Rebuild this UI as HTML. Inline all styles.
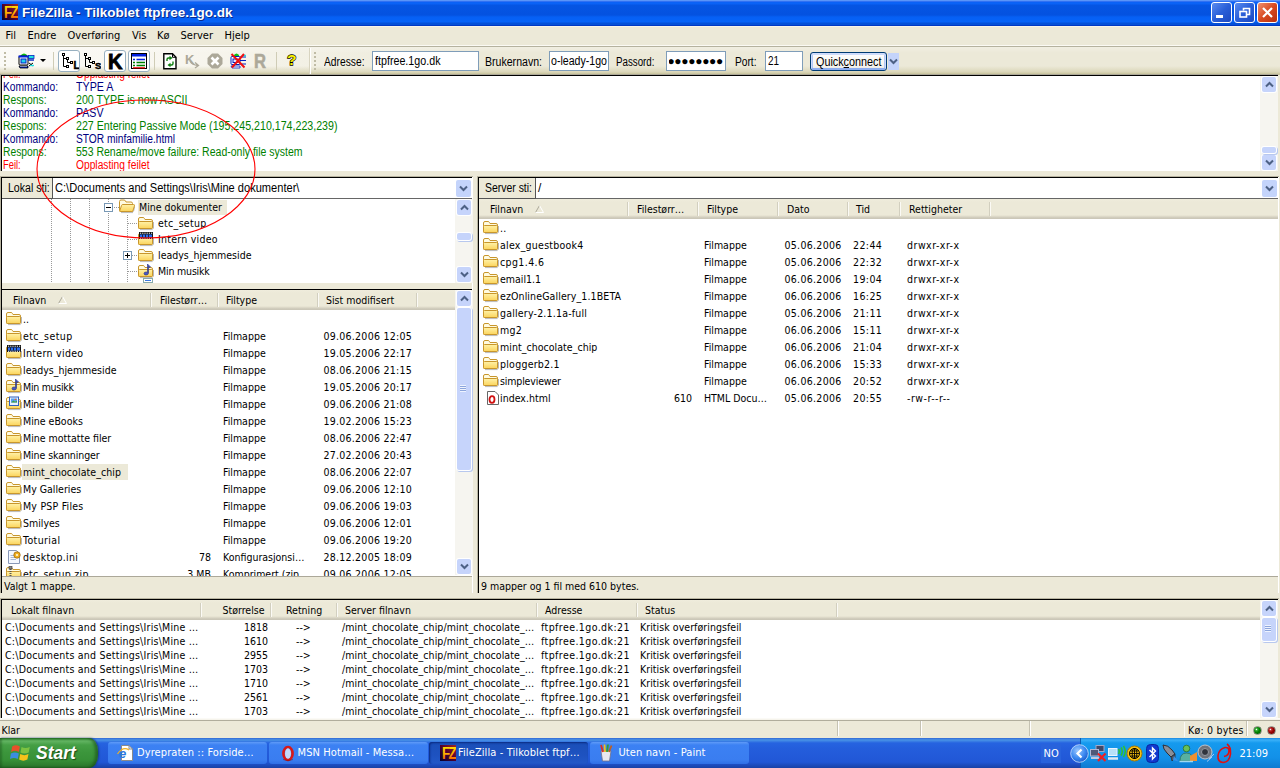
<!DOCTYPE html>
<html lang="no"><head><meta charset="utf-8"><title>FileZilla - Tilkoblet ftpfree.1go.dk</title>
<style>
html,body{margin:0;padding:0;}
body{width:1280px;height:768px;overflow:hidden;background:#ECE9D8;position:relative;font-family:'DejaVu Sans Condensed','DejaVu Sans','Liberation Sans',sans-serif;font-stretch:condensed;font-size:10.5px;color:#000;}
*{box-sizing:border-box;}
.a{position:absolute;white-space:pre;}
.t{position:absolute;white-space:pre;line-height:14px;height:14px;}
.ar{font-family:'Liberation Sans',sans-serif;}
#title{left:0;top:0;width:1280px;height:26px;background:linear-gradient(#5a94f8 0,#5a94f8 1px,#2f70f2 1px,#2f70f2 2px,#0a62f6 2px,#0a62f6 4px,#0555e3 5px,#0452e0 15px,#0660f4 17px,#0663f8 22px,#0450d8 23px,#0450d8 25px,#0038c4 25px);}
#title .txt{left:22px;top:4px;height:18px;line-height:18px;font-family:'Liberation Sans',sans-serif;font-weight:bold;font-size:13.5px;color:#fff;text-shadow:1px 1px 0 #0a2a8a;}
.tb{top:2px;width:21px;height:21px;border:1px solid #fff;border-radius:3px;background:linear-gradient(135deg,#5a8cf0,#2a5fd8 50%,#1c48c0);}
.tb.close{background:linear-gradient(135deg,#f09070,#d84a20 50%,#b83010);}
#menu{left:0;top:26px;width:1280px;height:20px;}
#menu span{position:absolute;top:3px;line-height:14px;font-size:11px;}
.pane{background:#fff;}
.hdr{background:#ECE9D8;}
.lh{background:linear-gradient(#efecdc 0,#ECE9D8 3px,#ECE9D8 16px,#e2decd 17px,#d6d2c2 18px,#cbc7b8 19px,#cbc7b8 20px);}
.hdr .t{top:3px;}
.sep{position:absolute;top:3px;width:1px;height:14px;background:#d2cfbf;box-shadow:1px 0 0 #fbfaf5;}
.row{position:absolute;left:0;height:17px;}
.sb{position:absolute;background:#f6f5f0;}
.sbb{position:absolute;left:2px;width:14px;height:15px;background:#c6d4fb;border-radius:2px;box-shadow:0 0 0 1px #fff;}
.sbb svg{position:absolute;left:2.5px;top:4px;}
.thumb{position:absolute;left:2px;width:14px;background:#c6d4fb;border-radius:2px;box-shadow:0 0 0 1px #fff,1px 1px 0 1px #b8c8ee;}
.ico{position:absolute;width:16px;height:16px;}
.c1{color:#000080;} .c2{color:#008000;} .c3{color:#ff0000;}
.inp{position:absolute;background:#fff;border:1px solid #7f9db9;height:20px;top:51px;}
.inp span{position:absolute;left:2px;top:2px;font-family:'Liberation Sans',sans-serif;font-size:12px;line-height:14px;white-space:pre;}
.lbl{position:absolute;top:54px;font-family:'Liberation Sans',sans-serif;font-size:11px;line-height:14px;white-space:pre;}
.tk{position:absolute;top:742px;height:22px;width:159px;border-radius:3px;background:linear-gradient(#5f9bf8 0,#3c81f3 3px,#3a7df0 18px,#2f6fe6);color:#fff;font-size:11px;letter-spacing:.1px;}
.tk.act{background:linear-gradient(#1a4fb8,#1e52c0 60%,#2258c8);box-shadow:inset 1px 1px 2px #0a2a80;}
.tk span{position:absolute;left:29px;top:4px;line-height:14px;white-space:pre;}
</style></head><body>

<svg width="0" height="0" style="position:absolute">
<defs>
<linearGradient id="fg" x1="0" y1="0" x2="0" y2="1"><stop offset="0" stop-color="#fff2a8"/><stop offset="1" stop-color="#fbd45c"/></linearGradient>
<symbol id="folder" viewBox="0 0 16 16">
<path d="M2 13.6 H14.6 M15.5 6 V12.6" stroke="#000" stroke-opacity=".28" stroke-width="1" fill="none"/>
<path d="M0.5 3 Q0.5 1.5 2 1.5 L5 1.5 Q6 1.5 6.5 2.5 L7 3.5 L13 3.5 Q14.5 3.5 14.5 5 L14.5 11.5 Q14.5 12.5 13.5 12.5 L1.5 12.5 Q0.5 12.5 0.5 11.5 Z" fill="#fffbe0" stroke="#c8962c" stroke-width="1"/>
<path d="M0.5 6.5 Q0.5 5.5 1.5 5.5 L13.5 5.5 Q14.5 5.5 14.5 6.5 L14.5 11.5 Q14.5 12.5 13.5 12.5 L1.5 12.5 Q0.5 12.5 0.5 11.5 Z" fill="url(#fg)" stroke="#c8962c" stroke-width="1"/>
</symbol>
<symbol id="folderopen" viewBox="0 0 16 16">
<path d="M2 13.6 H14 M15.5 8 L14.5 12.6" stroke="#000" stroke-opacity=".28" stroke-width="1" fill="none"/>
<path d="M0.5 2.5 Q0.5 1 2 1 L5 1 Q6 1 6.5 2 L7 3 L12 3 Q13.5 3 13.5 4.5 L13.5 12.5 L1.5 12.5 Q0.5 12.5 0.5 11.5 Z" fill="#fffbe0" stroke="#c8962c" stroke-width="1"/>
<path d="M2.5 6.5 Q2.8 5.5 3.8 5.5 L14.5 5.5 Q15.8 5.5 15.5 6.8 L14 11.5 Q13.7 12.5 12.7 12.5 L1.5 12.5 Q0.6 12.5 0.9 11.5 Z" fill="url(#fg)" stroke="#c8962c" stroke-width="1"/>
</symbol>
<symbol id="fvideo" viewBox="0 0 16 16">
<use href="#folder"/>
<rect x="1" y="0" width="14" height="7" fill="#111"/><rect x="2" y="2.5" width="12" height="3" fill="#2a6cf0"/>
<path d="M2 1.2 H14.5" stroke="#fff" stroke-width="1" stroke-dasharray="1.2 1"/><path d="M2 6.3 H14.5" stroke="#fff" stroke-width="1" stroke-dasharray="1.2 1"/>
<path d="M4.5 2.5 V5.5 M7.5 2.5 V5.5 M10.5 2.5 V5.5" stroke="#111" stroke-width="0.8"/>
</symbol>
<symbol id="fmusic" viewBox="0 0 16 16">
<use href="#folder"/>
<path d="M9.5 0 L12.5 3 L11.5 3.5 L10.5 2.5 L10.5 9 Q10.5 11 8 11 Q6 11 6 9.5 Q6 8 8 8 Q9 8 9.5 8.5 Z" fill="#4858c8" stroke="#202878" stroke-width="0.6"/>
</symbol>
<symbol id="fpics" viewBox="0 0 16 16">
<use href="#folder"/>
<rect x="3.5" y="1" width="9" height="8.5" fill="#e8f0ff" stroke="#3060c0" stroke-width="1"/><rect x="5" y="2.5" width="6" height="4" fill="#58a0f0"/><path d="M5 6.5 L7.5 4.5 L9 5.8 L11 4.8 V6.500Z" fill="#40a040"/><circle cx="9.5" cy="3.5" r="0.8" fill="#f06020"/>
</symbol>
<symbol id="fini" viewBox="0 0 16 16">
<path d="M2.5 1.5 H10.5 L13.5 4.5 V14.5 H2.500Z" fill="#f4f8ff" stroke="#8898b8" stroke-width="1"/>
<path d="M4.5 6.5 H9 M4.5 8.5 H11 M4.5 10.5 H10" stroke="#a8b8d8" stroke-width="1"/>
<circle cx="11" cy="6" r="3.2" fill="#f0b020" stroke="#a06810" stroke-width="0.8"/><circle cx="11" cy="6" r="1.1" fill="#fff8e0"/>
</symbol>
<symbol id="fzip" viewBox="0 0 16 16">
<use href="#folder"/>
<path d="M4.5 1 V12" stroke="#555" stroke-width="2" stroke-dasharray="1 1"/><rect x="3" y="0.5" width="3" height="2.5" fill="#888" stroke="#333" stroke-width="0.6"/>
</symbol>
<symbol id="arrdn" viewBox="0 0 9 7"><path d="M1 1.5 L4.5 5 L8 1.5" fill="none" stroke="#4d6185" stroke-width="2"/></symbol>
<symbol id="arrup" viewBox="0 0 9 7"><path d="M1 5.5 L4.5 2 L8 5.5" fill="none" stroke="#4d6185" stroke-width="2"/></symbol>
</defs></svg>

<div id="title" class="a">
<svg class="a" style="left:2px;top:4px" width="16" height="16" viewBox="0 0 16 16"><defs><linearGradient id="fzb" x1="0" y1="1" x2="1" y2="0"><stop offset="0" stop-color="#000030"/><stop offset=".5" stop-color="#500030"/><stop offset="1" stop-color="#a02828"/></linearGradient><linearGradient id="fzt" x1="0" y1="0" x2="0" y2="1"><stop offset="0" stop-color="#ffe800"/><stop offset=".5" stop-color="#ffb000"/><stop offset="1" stop-color="#f04800"/></linearGradient></defs><rect width="16" height="16" fill="url(#fzb)"/><text x="2" y="14" font-family="Liberation Sans,sans-serif" font-weight="bold" font-size="16" fill="url(#fzt)" textLength="13" lengthAdjust="spacingAndGlyphs" letter-spacing="-2">FZ</text></svg>
<div class="a txt">FileZilla - Tilkoblet ftpfree.1go.dk</div>
<div class="a tb" style="left:1211px"><div class="a" style="left:4px;top:12px;width:7px;height:3px;background:#fff"></div></div>
<div class="a tb" style="left:1234px"><svg class="a" style="left:3px;top:3px" width="13" height="13"><path d="M5.5 4.5 V2.5 H11.5 V8.5 H9" fill="none" stroke="#fff" stroke-width="1.6"/><rect x="2" y="5.5" width="6.5" height="5.5" fill="none" stroke="#fff" stroke-width="1.6"/></svg></div>
<div class="a tb close" style="left:1257px"><svg class="a" style="left:4px;top:4px" width="11" height="11"><path d="M1 1 L10 10 M10 1 L1 10" stroke="#fff" stroke-width="2.2"/></svg></div>
</div>
<div class="a" style="left:0;top:26px;width:1280px;height:1px;background:#f6f4ea"></div>
<div id="menu" class="a">
<span style="left:5.5px">Fil</span>
<span style="left:27.5px">Endre</span>
<span style="left:67.5px">Overføring</span>
<span style="left:132px">Vis</span>
<span style="left:157px">Kø</span>
<span style="left:180.5px">Server</span>
<span style="left:224.5px">Hjelp</span>
</div>
<div class="a" style="left:0;top:45px;width:1280px;height:1px;background:#fbfaf4"></div>
<div class="a" style="left:0;top:46px;width:1280px;height:1px;background:#b5b29f"></div>
<div id="toolbar" class="a" style="left:0;top:47px;width:1280px;height:28px;background:linear-gradient(rgba(255,255,255,.25) 0,transparent 6px,transparent 19px,rgba(205,200,160,.55) 25px,rgba(190,185,140,.8) 27px),linear-gradient(to right,#fbfaf6 0,#f8f6ef 180px,#f2f0e4 320px,#ECE9D8 460px)">
<div class="a" style="left:0;top:1px">
<div class="a" style="left:4px;top:4px;width:2px;height:18px;background:repeating-linear-gradient(#c0bca6 0 2px,transparent 2px 4px);box-shadow:none"></div>
<div class="a" style="left:314px;top:4px;width:2px;height:18px;background:repeating-linear-gradient(#c0bca6 0 2px,transparent 2px 4px);box-shadow:none"></div>
<div class="a" style="left:310px;top:0;width:1px;height:26px;background:#fff"></div><div class="a" style="left:309px;top:0;width:1px;height:26px;background:#d8d4c0"></div>
<div class="a" style="left:53px;top:4px;width:1px;height:18px;background:#cfccb6"></div>
<div class="a" style="left:154px;top:4px;width:1px;height:18px;background:#cfccb6"></div>
<div class="a" style="left:276px;top:4px;width:1px;height:18px;background:#cfccb6"></div>
<div class="a" style="left:58px;top:2px;width:22px;height:22px;background:#fff;border:1px solid #98b0c0;border-radius:3px"></div>
<div class="a" style="left:104px;top:2px;width:22px;height:22px;background:#fff;border:1px solid #98b0c0;border-radius:3px"></div>
<div class="a" style="left:127.5px;top:2px;width:22px;height:22px;background:#fff;border:1px solid #98b0c0;border-radius:3px"></div>
<svg class="a" style="left:18px;top:5px" width="17" height="16" viewBox="0 0 17 16"><path d="M3 2 Q6 -1 9 2 L9 4 L3 4Z" fill="#10c010"/><rect x="1" y="3" width="9" height="9" rx="1" fill="#fff" stroke="#000"/><rect x="0.5" y="2.5" width="10" height="2" fill="#0020e0"/><rect x="3" y="6" width="5" height="4" fill="#20d0f0" stroke="#0020c0"/><path d="M1 13 H10 V15 H2Z" fill="#0020c0" stroke="#000" stroke-width="0.8"/><path d="M2.5 13.5 H9" stroke="#fff" stroke-dasharray="1 1"/><rect x="10.5" y="2.5" width="5.5" height="3" fill="#20e0e0" stroke="#0020c0" stroke-width="0.8"/><path d="M10 7 H16" stroke="#0020c0" stroke-width="1.4"/><path d="M11 10 L15 13 M15 10 L11 13" stroke="#000"/><path d="M12 12.5 H16" stroke="#20e0e0" stroke-width="1.4"/></svg>
<svg class="a" style="left:40px;top:11px" width="6" height="4"><path d="M0 0 H6 L3 3Z" fill="#000"/></svg>
<svg class="a" style="left:62px;top:5px" width="17" height="17" viewBox="0 0 17 17"><path d="M1.5 3 V13.5 H4 M1.5 5.5 H4 M5.5 7 V9.5 H8" fill="none" stroke="#000" stroke-width="1"/><rect x="0.5" y="0.5" width="2" height="2" fill="#fff" stroke="#000"/><rect x="4.5" y="4.5" width="2" height="2" fill="#fff" stroke="#000"/><rect x="8.5" y="8.5" width="2" height="2" fill="#fff" stroke="#000"/><rect x="4.5" y="12.5" width="2" height="2" fill="#fff" stroke="#000"/><text x="11.5" y="16" font-family="Liberation Sans,sans-serif" font-weight="bold" font-size="10" fill="#000" stroke="#000" stroke-width="0.5">L</text></svg>
<svg class="a" style="left:84px;top:5px" width="17" height="17" viewBox="0 0 17 17"><path d="M1.5 3 V13.5 H4 M1.5 5.5 H4 M5.5 7 V9.5 H8" fill="none" stroke="#000" stroke-width="1"/><rect x="0.5" y="0.5" width="2" height="2" fill="#fff" stroke="#000"/><rect x="4.5" y="4.5" width="2" height="2" fill="#fff" stroke="#000"/><rect x="8.5" y="8.5" width="2" height="2" fill="#fff" stroke="#000"/><rect x="4.5" y="12.5" width="2" height="2" fill="#fff" stroke="#000"/><text x="11" y="16" font-family="Liberation Sans,sans-serif" font-weight="bold" font-size="9.5" fill="#000" stroke="#000" stroke-width="0.5">S</text></svg>
<svg class="a" style="left:106px;top:4px" width="19" height="18"><text x="2" y="16.8" font-family="Liberation Sans,sans-serif" font-weight="bold" font-size="22.5" fill="#000" stroke="#000" stroke-width="0.9" textLength="14.5" lengthAdjust="spacingAndGlyphs">K</text></svg>
<svg class="a" style="left:131px;top:5px" width="17" height="16" viewBox="0 0 17 16"><rect x="0.5" y="0.5" width="15" height="15" fill="#fff" stroke="#000"/><rect x="1" y="1" width="14" height="2.5" fill="#0020e0"/><path d="M2 6.5 H4 M5.5 6.5 H14" stroke="#0020e0" stroke-width="1.6"/><path d="M2 9.5 H4 M5.5 9.5 H14" stroke="#008000" stroke-width="1.6"/><path d="M2 12.5 H4 M5.5 12.5 H14" stroke="#008000" stroke-width="1.6"/><path d="M2 14.8 H14" stroke="#f00000" stroke-width="1.2"/></svg>
<svg class="a" style="left:163px;top:5px" width="14" height="17" viewBox="0 0 14 17"><path d="M0.8 0.8 H9.5 L13 4.3 V15.8 H0.8Z" fill="#fff" stroke="#000" stroke-width="1.4"/><path d="M9.5 0.8 V4.3 H13" fill="none" stroke="#000"/><path d="M4 8 V6.5 Q4 5 5.5 5 H7" fill="none" stroke="#108010" stroke-width="1.4"/><path d="M6.5 2.8 L9.5 5 L6.5 7.200Z" fill="#108010"/><path d="M10 8.5 V10.5 Q10 12 8.5 12 H7" fill="none" stroke="#108010" stroke-width="1.4"/><path d="M7.5 9.8 L4.5 12 L7.5 14.200Z" fill="#108010"/></svg>
<svg class="a" style="left:184px;top:5px" width="17" height="16"><text x="1" y="10.5" font-family="Liberation Sans,sans-serif" font-weight="bold" font-size="13" fill="#aca899">K</text><path d="M6 8 Q8 12 14 12.5 M11 9.5 L14.5 12.5 L11 15" fill="none" stroke="#aca899" stroke-width="1.3"/></svg>
<svg class="a" style="left:207px;top:5px" width="16" height="16" viewBox="0 0 16 16"><path d="M5 0.5 H11 L15.5 5 V11 L11 15.5 H5 L0.5 11 V5Z" fill="#aca899"/><path d="M4.5 4.5 L11.5 11.5 M11.5 4.5 L4.5 11.5" stroke="#fff" stroke-width="2.6"/></svg>
<svg class="a" style="left:230px;top:5px" width="17" height="16" viewBox="0 0 17 16"><path d="M4 2 Q6.5 -1 9 2 L9 4 L4 4Z" fill="#10c010"/><rect x="1" y="3.5" width="9" height="8" rx="1" fill="#fff" stroke="#0020c0"/><rect x="3" y="6" width="5" height="3.5" fill="#e8e8ff" stroke="#0020c0"/><path d="M1 13 H10 V15 H2Z" fill="#fff" stroke="#0020c0" stroke-width="0.8"/><path d="M10 4 H16 M10 7.5 H16 M10 11 H16" stroke="#0020c0" stroke-width="1.2"/><path d="M12 2.5 H16" stroke="#20e0e0" stroke-width="1.5"/><path d="M1.5 1 L14.5 14.5 M14 1 L2 14.5" stroke="#f01010" stroke-width="2"/></svg>
<svg class="a" style="left:253px;top:4px" width="16" height="18"><text x="1" y="16" font-family="Liberation Sans,sans-serif" font-weight="bold" font-size="20" fill="#aca899" stroke="#aca899" stroke-width="0.6" textLength="12" lengthAdjust="spacingAndGlyphs">R</text></svg>
<svg class="a" style="left:285px;top:2px" width="14" height="18"><text x="2" y="15" font-family="Liberation Sans,sans-serif" font-weight="bold" font-size="15.5" fill="#f8f000" stroke="#000" stroke-width="1.3" paint-order="stroke">?</text></svg>
</div></div>
<div class="t ar " style="left:324px;top:55px;font-size:12px;transform:scaleX(0.8552);transform-origin:0 0;">Adresse:</div>
<div class="t ar " style="left:484.5px;top:55px;font-size:12px;transform:scaleX(0.8810);transform-origin:0 0;">Brukernavn:</div>
<div class="t ar " style="left:616px;top:55px;font-size:12px;transform:scaleX(0.8130);transform-origin:0 0;">Passord:</div>
<div class="t ar " style="left:735px;top:55px;font-size:12px;transform:scaleX(0.8483);transform-origin:0 0;">Port:</div>
<div class="inp" style="left:372px;width:107px"></div>
<div class="t ar " style="left:374.5px;top:54px;font-size:12px;transform:scaleX(0.8926);transform-origin:0 0;">ftpfree.1go.dk</div>
<div class="inp" style="left:549px;width:60px"></div>
<div class="t ar " style="left:550.5px;top:54px;font-size:12px;transform:scaleX(0.8837);transform-origin:0 0;">o-leady-1go</div>
<div class="a" style="left:549px;top:52px;width:2px;height:18px;background:#fff"></div><div class="a" style="left:549px;top:51px;width:1px;height:20px;background:#7f9db9"></div>
<div class="inp" style="left:666px;width:60px;overflow:hidden"><span style="left:0.4px;top:2px;font-size:12px;letter-spacing:-0.3px">●●●●●●●●</span><i class="a" style="left:0;top:0;width:2px;height:18px;background:#fff"></i></div>
<div class="inp" style="left:765px;width:38px"></div>
<div class="t ar " style="left:767.5px;top:54px;font-size:12px;transform:scaleX(0.8242);transform-origin:0 0;">21</div>
<div class="a" style="left:810px;top:52px;width:77px;height:19px;border:1px solid #003c74;border-radius:3px;background:linear-gradient(#fff,#f4f3ee 80%,#e4e0d6);box-shadow:inset 0 1px 0 1px #cfdcfb,inset 0 -1px 0 1px #8eaef0,inset 0 0 0 2px #b4c8f6"><span class="a ar" style="left:5px;top:1.5px;font-size:12px;line-height:14px;transform:scaleX(0.90);transform-origin:0 0">Quick<u>c</u>onnect</span></div>
<div class="a" style="left:888px;top:53px;width:11px;height:17px;background:#c4d4fb"><svg class="a" style="left:1px;top:5px" width="9" height="7"><use href="#arrdn"/></svg></div>
<div class="a" style="left:0;top:74px;width:1278px;height:97px;background:#aca899"></div>
<div class="a pane log" style="left:1px;top:75px;width:1277px;height:96px;border-top:1px solid #000;border-left:1px solid #000;overflow:hidden">
<div class="t ar c3" style="left:0.6px;top:-8px;font-size:12px;transform:scaleX(0.7808);transform-origin:0 0;line-height:13px;height:13px">Feil:</div>
<div class="t ar c3" style="left:73.8px;top:-8px;font-size:12px;transform:scaleX(0.8542);transform-origin:0 0;line-height:13px;height:13px">Opplasting feilet</div>
<div class="t ar c1" style="left:0.6px;top:5px;font-size:12px;transform:scaleX(0.8501);transform-origin:0 0;line-height:13px;height:13px">Kommando:</div>
<div class="t ar c1" style="left:73.8px;top:5px;font-size:12px;transform:scaleX(0.8924);transform-origin:0 0;line-height:13px;height:13px">TYPE A</div>
<div class="t ar c2" style="left:0.6px;top:18px;font-size:12px;transform:scaleX(0.8581);transform-origin:0 0;line-height:13px;height:13px">Respons:</div>
<div class="t ar c2" style="left:73.8px;top:18px;font-size:12px;transform:scaleX(0.8860);transform-origin:0 0;line-height:13px;height:13px">200 TYPE is now ASCII</div>
<div class="t ar c1" style="left:0.6px;top:31px;font-size:12px;transform:scaleX(0.8501);transform-origin:0 0;line-height:13px;height:13px">Kommando:</div>
<div class="t ar c1" style="left:73.8px;top:31px;font-size:12px;transform:scaleX(0.8834);transform-origin:0 0;line-height:13px;height:13px">PASV</div>
<div class="t ar c2" style="left:0.6px;top:44px;font-size:12px;transform:scaleX(0.8581);transform-origin:0 0;line-height:13px;height:13px">Respons:</div>
<div class="t ar c2" style="left:73.8px;top:44px;font-size:12px;transform:scaleX(0.8868);transform-origin:0 0;line-height:13px;height:13px">227 Entering Passive Mode (195,245,210,174,223,239)</div>
<div class="t ar c1" style="left:0.6px;top:57px;font-size:12px;transform:scaleX(0.8501);transform-origin:0 0;line-height:13px;height:13px">Kommando:</div>
<div class="t ar c1" style="left:73.8px;top:57px;font-size:12px;transform:scaleX(0.8500);transform-origin:0 0;line-height:13px;height:13px">STOR minfamilie.html</div>
<div class="t ar c2" style="left:0.6px;top:70px;font-size:12px;transform:scaleX(0.8581);transform-origin:0 0;line-height:13px;height:13px">Respons:</div>
<div class="t ar c2" style="left:73.8px;top:70px;font-size:12px;transform:scaleX(0.8753);transform-origin:0 0;line-height:13px;height:13px">553 Rename/move failure: Read-only file system</div>
<div class="t ar c3" style="left:0.6px;top:83px;font-size:12px;transform:scaleX(0.7808);transform-origin:0 0;line-height:13px;height:13px">Feil:</div>
<div class="t ar c3" style="left:73.8px;top:83px;font-size:12px;transform:scaleX(0.8542);transform-origin:0 0;line-height:13px;height:13px">Opplasting feilet</div>
</div>
<div class="a" style="left:1px;top:177px;width:471px;height:1px;background:#000"></div>
<div class="a" style="left:0;top:176px;width:473px;height:1px;background:#b8b4a0"></div>
<div class="a" style="left:0;top:176px;width:1px;height:417px;background:#b8b4a0"></div>
<div class="a" style="left:1px;top:177px;width:1px;height:416px;background:#000"></div>
<div class="a hdr" style="left:2px;top:178px;width:51px;height:21px;border-right:1px solid #555;border-bottom:1px solid #555"><div class="t ar" style="left:6px;top:3px;font-size:12px;transform:scaleX(0.88);transform-origin:0 0">Lokal sti:</div></div>
<div class="a pane" style="left:53px;top:178px;width:419px;height:21px;border-bottom:1px solid #666"><div class="t ar" style="left:2px;top:3px;font-size:12px;transform:scaleX(0.923);transform-origin:0 0">C:\Documents and Settings\Iris\Mine dokumenter\</div>
<div class="a" style="left:403px;top:2px;width:15px;height:17px;background:#c4d4fb;border-radius:2px"><svg class="a" style="left:3px;top:5px" width="9" height="7"><use href="#arrdn"/></svg></div></div>
<div class="a pane" style="left:2px;top:199px;width:470px;height:84px;overflow:hidden">
<div class="a" style="left:49px;top:0;width:1px;height:84px;background:repeating-linear-gradient(#999 0 1px,transparent 1px 2px)"></div>
<div class="a" style="left:68px;top:0;width:1px;height:84px;background:repeating-linear-gradient(#999 0 1px,transparent 1px 2px)"></div>
<div class="a" style="left:87px;top:0;width:1px;height:84px;background:repeating-linear-gradient(#999 0 1px,transparent 1px 2px)"></div>
<div class="a" style="left:106px;top:0;width:1px;height:84px;background:repeating-linear-gradient(#999 0 1px,transparent 1px 2px)"></div>
<div class="a" style="left:125px;top:16px;width:1px;height:68px;background:repeating-linear-gradient(#999 0 1px,transparent 1px 2px)"></div>
<div class="a" style="left:110px;top:8px;width:8px;height:1px;background:repeating-linear-gradient(90deg,#999 0 1px,transparent 1px 2px)"></div>
<div class="a" style="left:136.0px;top:1px;width:89px;height:15px;background:#ECE9D8"></div>
<svg class="ico" style="left:116.5px;top:0px;width:16px;height:16px"><use href="#folderopen"/></svg>
<div class="t " style="left:137px;top:1px;letter-spacing:0px">Mine dokumenter</div>
<div class="a" style="left:126px;top:24px;width:10px;height:1px;background:repeating-linear-gradient(90deg,#999 0 1px,transparent 1px 2px)"></div>
<svg class="ico" style="left:136.0px;top:17px;width:16px;height:16px"><use href="#folder"/></svg>
<div class="t " style="left:156px;top:17px;letter-spacing:0.3px">etc_setup</div>
<div class="a" style="left:126px;top:40px;width:10px;height:1px;background:repeating-linear-gradient(90deg,#999 0 1px,transparent 1px 2px)"></div>
<svg class="ico" style="left:136.0px;top:33px;width:16px;height:16px"><use href="#fvideo"/></svg>
<div class="t " style="left:156px;top:33px;letter-spacing:0.25px">Intern video</div>
<div class="a" style="left:126px;top:56px;width:10px;height:1px;background:repeating-linear-gradient(90deg,#999 0 1px,transparent 1px 2px)"></div>
<svg class="ico" style="left:136.0px;top:49px;width:16px;height:16px"><use href="#folder"/></svg>
<div class="t " style="left:156px;top:49px;letter-spacing:0px">leadys_hjemmeside</div>
<div class="a" style="left:126px;top:72px;width:10px;height:1px;background:repeating-linear-gradient(90deg,#999 0 1px,transparent 1px 2px)"></div>
<svg class="ico" style="left:136.0px;top:65px;width:16px;height:16px"><use href="#fmusic"/></svg>
<div class="t " style="left:156px;top:65px;letter-spacing:-0.18px">Min musikk</div>
<div class="a" style="left:142px;top:80px;width:8px;height:3px;background:#3a78e0;border:1px solid #fff;box-shadow:0 0 0 1px #8aa"></div>
<div class="a" style="left:102px;top:4px;width:9px;height:9px;border:1px solid #7898b5;background:#fff"><div class="a" style="left:1px;top:3px;width:5px;height:1px;background:#000"></div></div>
<div class="a" style="left:121px;top:52px;width:9px;height:9px;border:1px solid #7898b5;background:#fff"><div class="a" style="left:1px;top:3px;width:5px;height:1px;background:#000"></div><div class="a" style="left:3px;top:1px;width:1px;height:5px;background:#000"></div></div>
</div>
<div class="a" style="left:1px;top:289px;width:471px;height:1px;background:#000"></div>
<div class="a hdr lh" style="left:2px;top:290px;width:470px;height:20px" >
<div class="t " style="left:11px;top:3px;">Filnavn</div>
<div class="t " style="left:158px;top:3px;">Filestørr…</div>
<div class="t " style="left:224px;top:3px;">Filtype</div>
<div class="t " style="left:324px;top:3px;">Sist modifisert</div>
<div class="sep" style="left:148px"></div>
<div class="sep" style="left:215px"></div>
<div class="sep" style="left:315px"></div>
<div class="sep" style="left:414px"></div>
<svg class="a" style="left:56px;top:6px" width="9" height="8"><path d="M0.5 7.5 L4.5 0.5" stroke="#aca899" fill="none"/><path d="M4.5 0.5 L8.5 7.5 H0.5" stroke="#fff" fill="none"/></svg>
</div>
<div class="a pane" style="left:2px;top:310px;width:470px;height:266px;overflow:hidden">
<svg class="ico" style="left:4px;top:1px;width:16px;height:16px"><use href="#folder"/></svg>
<div class="t " style="left:21px;top:2px;letter-spacing:0px">..</div>
<svg class="ico" style="left:4px;top:18px;width:16px;height:16px"><use href="#folder"/></svg>
<div class="t " style="left:21px;top:19px;letter-spacing:0.42px">etc_setup</div>
<div class="t " style="left:221px;top:19px;">Filmappe</div>
<div class="t " style="left:321.5px;top:19px;letter-spacing:.26px">09.06.2006 12:05</div>
<svg class="ico" style="left:4px;top:35px;width:16px;height:16px"><use href="#fvideo"/></svg>
<div class="t " style="left:21px;top:36px;letter-spacing:0.3px">Intern video</div>
<div class="t " style="left:221px;top:36px;">Filmappe</div>
<div class="t " style="left:321.5px;top:36px;letter-spacing:.26px">19.05.2006 22:17</div>
<svg class="ico" style="left:4px;top:52px;width:16px;height:16px"><use href="#folder"/></svg>
<div class="t " style="left:21px;top:53px;letter-spacing:0px">leadys_hjemmeside</div>
<div class="t " style="left:221px;top:53px;">Filmappe</div>
<div class="t " style="left:321.5px;top:53px;letter-spacing:.26px">08.06.2006 21:15</div>
<svg class="ico" style="left:4px;top:69px;width:16px;height:16px"><use href="#fmusic"/></svg>
<div class="t " style="left:21px;top:70px;letter-spacing:-0.27px">Min musikk</div>
<div class="t " style="left:221px;top:70px;">Filmappe</div>
<div class="t " style="left:321.5px;top:70px;letter-spacing:.26px">19.05.2006 20:17</div>
<svg class="ico" style="left:4px;top:86px;width:16px;height:16px"><use href="#fpics"/></svg>
<div class="t " style="left:21px;top:87px;letter-spacing:-0.24px">Mine bilder</div>
<div class="t " style="left:221px;top:87px;">Filmappe</div>
<div class="t " style="left:321.5px;top:87px;letter-spacing:.26px">09.06.2006 21:08</div>
<svg class="ico" style="left:4px;top:103px;width:16px;height:16px"><use href="#folder"/></svg>
<div class="t " style="left:21px;top:104px;letter-spacing:0px">Mine eBooks</div>
<div class="t " style="left:221px;top:104px;">Filmappe</div>
<div class="t " style="left:321.5px;top:104px;letter-spacing:.26px">19.02.2006 15:23</div>
<svg class="ico" style="left:4px;top:120px;width:16px;height:16px"><use href="#folder"/></svg>
<div class="t " style="left:21px;top:121px;letter-spacing:0px">Mine mottatte filer</div>
<div class="t " style="left:221px;top:121px;">Filmappe</div>
<div class="t " style="left:321.5px;top:121px;letter-spacing:.26px">08.06.2006 22:47</div>
<svg class="ico" style="left:4px;top:137px;width:16px;height:16px"><use href="#folder"/></svg>
<div class="t " style="left:21px;top:138px;letter-spacing:-0.08px">Mine skanninger</div>
<div class="t " style="left:221px;top:138px;">Filmappe</div>
<div class="t " style="left:321.5px;top:138px;letter-spacing:.26px">27.02.2006 20:43</div>
<div class="a" style="left:20px;top:154px;width:106px;height:16px;background:#ECE9D8"></div>
<svg class="ico" style="left:4px;top:154px;width:16px;height:16px"><use href="#folder"/></svg>
<div class="t " style="left:21px;top:155px;letter-spacing:0.08px">mint_chocolate_chip</div>
<div class="t " style="left:221px;top:155px;">Filmappe</div>
<div class="t " style="left:321.5px;top:155px;letter-spacing:.26px">08.06.2006 22:07</div>
<svg class="ico" style="left:4px;top:171px;width:16px;height:16px"><use href="#folder"/></svg>
<div class="t " style="left:21px;top:172px;letter-spacing:0px">My Galleries</div>
<div class="t " style="left:221px;top:172px;">Filmappe</div>
<div class="t " style="left:321.5px;top:172px;letter-spacing:.26px">09.06.2006 12:10</div>
<svg class="ico" style="left:4px;top:188px;width:16px;height:16px"><use href="#folder"/></svg>
<div class="t " style="left:21px;top:189px;letter-spacing:0.22px">My PSP Files</div>
<div class="t " style="left:221px;top:189px;">Filmappe</div>
<div class="t " style="left:321.5px;top:189px;letter-spacing:.26px">09.06.2006 19:03</div>
<svg class="ico" style="left:4px;top:205px;width:16px;height:16px"><use href="#folder"/></svg>
<div class="t " style="left:21px;top:206px;letter-spacing:0px">Smilyes</div>
<div class="t " style="left:221px;top:206px;">Filmappe</div>
<div class="t " style="left:321.5px;top:206px;letter-spacing:.26px">09.06.2006 12:01</div>
<svg class="ico" style="left:4px;top:222px;width:16px;height:16px"><use href="#folder"/></svg>
<div class="t " style="left:21px;top:223px;letter-spacing:0.4px">Toturial</div>
<div class="t " style="left:221px;top:223px;">Filmappe</div>
<div class="t " style="left:321.5px;top:223px;letter-spacing:.26px">09.06.2006 19:20</div>
<svg class="ico" style="left:4px;top:239px;width:16px;height:16px"><use href="#fini"/></svg>
<div class="t " style="left:21px;top:240px;letter-spacing:0.3px">desktop.ini</div>
<div class="t" style="left:150px;width:59px;text-align:right;top:240px">78</div>
<div class="t " style="left:221px;top:240px;">Konfigurasjonsi…</div>
<div class="t " style="left:321.5px;top:240px;letter-spacing:.26px">28.12.2005 18:09</div>
<svg class="ico" style="left:4px;top:256px;width:16px;height:16px"><use href="#fzip"/></svg>
<div class="t " style="left:21px;top:257px;letter-spacing:0.25px">etc_setup.zip</div>
<div class="t" style="left:150px;width:59px;text-align:right;top:257px">3 MB</div>
<div class="t " style="left:221px;top:257px;">Komprimert (zip…</div>
<div class="t " style="left:321.5px;top:257px;letter-spacing:.26px">09.06.2006 12:05</div>
</div>
<div class="a" style="left:2px;top:576px;width:470px;height:1px;background:#aca899"></div>
<div class="t " style="left:4px;top:579px;">Valgt 1 mappe.</div>
<div class="a" style="left:472px;top:177px;width:1px;height:416px;background:#fff"></div>
<div class="a" style="left:478px;top:177px;width:800px;height:1px;background:#000"></div>
<div class="a" style="left:477px;top:176px;width:802px;height:1px;background:#b8b4a0"></div>
<div class="a" style="left:477px;top:176px;width:1px;height:417px;background:#b8b4a0"></div>
<div class="a" style="left:478px;top:177px;width:1px;height:416px;background:#000"></div>
<div class="a hdr" style="left:479px;top:178px;width:57px;height:21px;border-right:1px solid #555;border-bottom:1px solid #555"><div class="t ar" style="left:6px;top:3px;font-size:12px;transform:scaleX(0.87);transform-origin:0 0">Server sti:</div></div>
<div class="a pane" style="left:536px;top:178px;width:1742px;height:21px;border-bottom:1px solid #666;width:742px"><div class="t ar" style="left:2px;top:3px;font-size:12px">/</div>
<div class="a" style="left:726px;top:2px;width:15px;height:17px;background:#c4d4fb;border-radius:2px"><svg class="a" style="left:3px;top:5px" width="9" height="7"><use href="#arrdn"/></svg></div></div>
<div class="a hdr lh" style="left:479px;top:199px;width:799px;height:20px" >
<div class="t " style="left:11px;top:3px;">Filnavn</div>
<div class="t " style="left:158px;top:3px;">Filestørr…</div>
<div class="t " style="left:228px;top:3px;">Filtype</div>
<div class="t " style="left:308px;top:3px;">Dato</div>
<div class="t " style="left:377px;top:3px;">Tid</div>
<div class="t " style="left:430px;top:3px;">Rettigheter</div>
<div class="sep" style="left:148px"></div>
<div class="sep" style="left:218px"></div>
<div class="sep" style="left:298px"></div>
<div class="sep" style="left:368px"></div>
<div class="sep" style="left:420px"></div>
<div class="sep" style="left:510px"></div>
<svg class="a" style="left:56px;top:6px" width="9" height="8"><path d="M0.5 7.5 L4.5 0.5" stroke="#aca899" fill="none"/><path d="M4.5 0.5 L8.5 7.5 H0.5" stroke="#fff" fill="none"/></svg>
</div>
<div class="a pane" style="left:479px;top:219px;width:799px;height:357px;overflow:hidden">
<svg class="ico" style="left:4px;top:1px;width:16px;height:16px"><use href="#folder"/></svg>
<div class="t " style="left:21px;top:2px;letter-spacing:0.25px">..</div>
<svg class="ico" style="left:4px;top:18px;width:16px;height:16px"><use href="#folder"/></svg>
<div class="t " style="left:21px;top:19px;letter-spacing:0.25px">alex_guestbook4</div>
<div class="t " style="left:225px;top:19px;">Filmappe</div>
<div class="t " style="left:305.5px;top:19px;letter-spacing:.3px">05.06.2006</div>
<div class="t " style="left:374px;top:19px;letter-spacing:.4px">22:44</div>
<div class="t " style="left:428px;top:19px;letter-spacing:.5px">drwxr-xr-x</div>
<svg class="ico" style="left:4px;top:35px;width:16px;height:16px"><use href="#folder"/></svg>
<div class="t " style="left:21px;top:36px;letter-spacing:0.39px">cpg1.4.6</div>
<div class="t " style="left:225px;top:36px;">Filmappe</div>
<div class="t " style="left:305.5px;top:36px;letter-spacing:.3px">05.06.2006</div>
<div class="t " style="left:374px;top:36px;letter-spacing:.4px">22:32</div>
<div class="t " style="left:428px;top:36px;letter-spacing:.5px">drwxr-xr-x</div>
<svg class="ico" style="left:4px;top:52px;width:16px;height:16px"><use href="#folder"/></svg>
<div class="t " style="left:21px;top:53px;letter-spacing:0px">email1.1</div>
<div class="t " style="left:225px;top:53px;">Filmappe</div>
<div class="t " style="left:305.5px;top:53px;letter-spacing:.3px">06.06.2006</div>
<div class="t " style="left:374px;top:53px;letter-spacing:.4px">19:04</div>
<div class="t " style="left:428px;top:53px;letter-spacing:.5px">drwxr-xr-x</div>
<svg class="ico" style="left:4px;top:69px;width:16px;height:16px"><use href="#folder"/></svg>
<div class="t " style="left:21px;top:70px;letter-spacing:0.11px">ezOnlineGallery_1.1BETA</div>
<div class="t " style="left:225px;top:70px;">Filmappe</div>
<div class="t " style="left:305.5px;top:70px;letter-spacing:.3px">06.06.2006</div>
<div class="t " style="left:374px;top:70px;letter-spacing:.4px">16:25</div>
<div class="t " style="left:428px;top:70px;letter-spacing:.5px">drwxr-xr-x</div>
<svg class="ico" style="left:4px;top:86px;width:16px;height:16px"><use href="#folder"/></svg>
<div class="t " style="left:21px;top:87px;letter-spacing:0.2px">gallery-2.1.1a-full</div>
<div class="t " style="left:225px;top:87px;">Filmappe</div>
<div class="t " style="left:305.5px;top:87px;letter-spacing:.3px">05.06.2006</div>
<div class="t " style="left:374px;top:87px;letter-spacing:.4px">21:11</div>
<div class="t " style="left:428px;top:87px;letter-spacing:.5px">drwxr-xr-x</div>
<svg class="ico" style="left:4px;top:103px;width:16px;height:16px"><use href="#folder"/></svg>
<div class="t " style="left:21px;top:104px;letter-spacing:0.25px">mg2</div>
<div class="t " style="left:225px;top:104px;">Filmappe</div>
<div class="t " style="left:305.5px;top:104px;letter-spacing:.3px">06.06.2006</div>
<div class="t " style="left:374px;top:104px;letter-spacing:.4px">15:11</div>
<div class="t " style="left:428px;top:104px;letter-spacing:.5px">drwxr-xr-x</div>
<svg class="ico" style="left:4px;top:120px;width:16px;height:16px"><use href="#folder"/></svg>
<div class="t " style="left:21px;top:121px;letter-spacing:0.04px">mint_chocolate_chip</div>
<div class="t " style="left:225px;top:121px;">Filmappe</div>
<div class="t " style="left:305.5px;top:121px;letter-spacing:.3px">06.06.2006</div>
<div class="t " style="left:374px;top:121px;letter-spacing:.4px">21:04</div>
<div class="t " style="left:428px;top:121px;letter-spacing:.5px">drwxr-xr-x</div>
<svg class="ico" style="left:4px;top:137px;width:16px;height:16px"><use href="#folder"/></svg>
<div class="t " style="left:21px;top:138px;letter-spacing:0.25px">ploggerb2.1</div>
<div class="t " style="left:225px;top:138px;">Filmappe</div>
<div class="t " style="left:305.5px;top:138px;letter-spacing:.3px">06.06.2006</div>
<div class="t " style="left:374px;top:138px;letter-spacing:.4px">15:33</div>
<div class="t " style="left:428px;top:138px;letter-spacing:.5px">drwxr-xr-x</div>
<svg class="ico" style="left:4px;top:154px;width:16px;height:16px"><use href="#folder"/></svg>
<div class="t " style="left:21px;top:155px;letter-spacing:-0.15px">simpleviewer</div>
<div class="t " style="left:225px;top:155px;">Filmappe</div>
<div class="t " style="left:305.5px;top:155px;letter-spacing:.3px">06.06.2006</div>
<div class="t " style="left:374px;top:155px;letter-spacing:.4px">20:52</div>
<div class="t " style="left:428px;top:155px;letter-spacing:.5px">drwxr-xr-x</div>
<svg class="ico" style="left:6px;top:171px" viewBox="0 0 16 16"><path d="M2.5 1.5 H10 L13.5 5 V14.5 H2.500Z" fill="#fff" stroke="#666"/><ellipse cx="7" cy="9.5" rx="2.5" ry="3.3" fill="none" stroke="#d01010" stroke-width="1.8"/></svg>
<div class="t " style="left:21px;top:172px;letter-spacing:0.03px">index.html</div>
<div class="t" style="left:150px;width:63px;text-align:right;top:172px">610</div>
<div class="t " style="left:225px;top:172px;">HTML Docu…</div>
<div class="t " style="left:305.5px;top:172px;letter-spacing:.3px">05.06.2006</div>
<div class="t " style="left:374px;top:172px;letter-spacing:.4px">20:55</div>
<div class="t " style="left:428px;top:172px;letter-spacing:.5px">-rw-r--r--</div>
</div>
<div class="a" style="left:479px;top:576px;width:799px;height:1px;background:#aca899"></div>
<div class="t " style="left:481px;top:579px;">9 mapper og 1 fil med 610 bytes.</div>
<div class="a" style="left:1278px;top:177px;width:1px;height:416px;background:#fff"></div>
<div class="a" style="left:1px;top:599px;width:1277px;height:1px;background:#000"></div>
<div class="a" style="left:0;top:598px;width:1279px;height:1px;background:#b8b4a0"></div>
<div class="a" style="left:0;top:598px;width:1px;height:120px;background:#b8b4a0"></div>
<div class="a" style="left:1px;top:599px;width:1px;height:119px;background:#000"></div>
<div class="a hdr lh" style="left:2px;top:600px;width:1276px;height:20px" >
<div class="t " style="left:9px;top:3px;">Lokalt filnavn</div>
<div class="t " style="left:220.5px;top:3px;">Størrelse</div>
<div class="t " style="left:284px;top:3px;">Retning</div>
<div class="t " style="left:343px;top:3px;">Server filnavn</div>
<div class="t " style="left:543px;top:3px;">Adresse</div>
<div class="t " style="left:643px;top:3px;">Status</div>
<div class="sep" style="left:198px"></div>
<div class="sep" style="left:268px"></div>
<div class="sep" style="left:334px"></div>
<div class="sep" style="left:534px"></div>
<div class="sep" style="left:634px"></div>
<div class="sep" style="left:834px"></div>
</div>
<div class="a pane" style="left:2px;top:620px;width:1276px;height:98px;overflow:hidden">
<div class="t " style="left:3px;top:0px;letter-spacing:.23px">C:\Documents and Settings\Iris\Mine …</div>
<div class="t" style="left:200px;width:66px;text-align:right;top:0px">1818</div>
<div class="t " style="left:294px;top:0px;">--&gt;</div>
<div class="t " style="left:340px;top:0px;letter-spacing:.08px">/mint_chocolate_chip/mint_chocolate_…</div>
<div class="t " style="left:539px;top:0px;letter-spacing:.42px">ftpfree.1go.dk:21</div>
<div class="t " style="left:638px;top:0px;letter-spacing:.05px">Kritisk overføringsfeil</div>
<div class="t " style="left:3px;top:14px;letter-spacing:.23px">C:\Documents and Settings\Iris\Mine …</div>
<div class="t" style="left:200px;width:66px;text-align:right;top:14px">1610</div>
<div class="t " style="left:294px;top:14px;">--&gt;</div>
<div class="t " style="left:340px;top:14px;letter-spacing:.08px">/mint_chocolate_chip/mint_chocolate_…</div>
<div class="t " style="left:539px;top:14px;letter-spacing:.42px">ftpfree.1go.dk:21</div>
<div class="t " style="left:638px;top:14px;letter-spacing:.05px">Kritisk overføringsfeil</div>
<div class="t " style="left:3px;top:28px;letter-spacing:.23px">C:\Documents and Settings\Iris\Mine …</div>
<div class="t" style="left:200px;width:66px;text-align:right;top:28px">2955</div>
<div class="t " style="left:294px;top:28px;">--&gt;</div>
<div class="t " style="left:340px;top:28px;letter-spacing:.08px">/mint_chocolate_chip/mint_chocolate_…</div>
<div class="t " style="left:539px;top:28px;letter-spacing:.42px">ftpfree.1go.dk:21</div>
<div class="t " style="left:638px;top:28px;letter-spacing:.05px">Kritisk overføringsfeil</div>
<div class="t " style="left:3px;top:42px;letter-spacing:.23px">C:\Documents and Settings\Iris\Mine …</div>
<div class="t" style="left:200px;width:66px;text-align:right;top:42px">1703</div>
<div class="t " style="left:294px;top:42px;">--&gt;</div>
<div class="t " style="left:340px;top:42px;letter-spacing:.08px">/mint_chocolate_chip/mint_chocolate_…</div>
<div class="t " style="left:539px;top:42px;letter-spacing:.42px">ftpfree.1go.dk:21</div>
<div class="t " style="left:638px;top:42px;letter-spacing:.05px">Kritisk overføringsfeil</div>
<div class="t " style="left:3px;top:56px;letter-spacing:.23px">C:\Documents and Settings\Iris\Mine …</div>
<div class="t" style="left:200px;width:66px;text-align:right;top:56px">1710</div>
<div class="t " style="left:294px;top:56px;">--&gt;</div>
<div class="t " style="left:340px;top:56px;letter-spacing:.08px">/mint_chocolate_chip/mint_chocolate_…</div>
<div class="t " style="left:539px;top:56px;letter-spacing:.42px">ftpfree.1go.dk:21</div>
<div class="t " style="left:638px;top:56px;letter-spacing:.05px">Kritisk overføringsfeil</div>
<div class="t " style="left:3px;top:70px;letter-spacing:.23px">C:\Documents and Settings\Iris\Mine …</div>
<div class="t" style="left:200px;width:66px;text-align:right;top:70px">2561</div>
<div class="t " style="left:294px;top:70px;">--&gt;</div>
<div class="t " style="left:340px;top:70px;letter-spacing:.08px">/mint_chocolate_chip/mint_chocolate_…</div>
<div class="t " style="left:539px;top:70px;letter-spacing:.42px">ftpfree.1go.dk:21</div>
<div class="t " style="left:638px;top:70px;letter-spacing:.05px">Kritisk overføringsfeil</div>
<div class="t " style="left:3px;top:84px;letter-spacing:.23px">C:\Documents and Settings\Iris\Mine …</div>
<div class="t" style="left:200px;width:66px;text-align:right;top:84px">1703</div>
<div class="t " style="left:294px;top:84px;">--&gt;</div>
<div class="t " style="left:340px;top:84px;letter-spacing:.08px">/mint_chocolate_chip/mint_chocolate_…</div>
<div class="t " style="left:539px;top:84px;letter-spacing:.42px">ftpfree.1go.dk:21</div>
<div class="t " style="left:638px;top:84px;letter-spacing:.05px">Kritisk overføringsfeil</div>
</div>
<div class="sb" style="left:1260px;top:76px;width:18px;height:95px">
<div class="sbb" style="top:1px"><svg width="9" height="7"><use href="#arrup"/></svg></div>
<div class="sbb" style="top:79px"><svg width="9" height="7"><use href="#arrdn"/></svg></div>
<div class="thumb" style="top:71px;height:6px">
</div></div>
<div class="sb" style="left:455px;top:199px;width:18px;height:84px">
<div class="sbb" style="top:1px"><svg width="9" height="7"><use href="#arrup"/></svg></div>
<div class="sbb" style="top:68px"><svg width="9" height="7"><use href="#arrdn"/></svg></div>
<div class="thumb" style="top:34px;height:7px">
</div></div>
<div class="sb" style="left:455px;top:290px;width:18px;height:285px">
<div class="sbb" style="top:1px"><svg width="9" height="7"><use href="#arrup"/></svg></div>
<div class="sbb" style="top:269px"><svg width="9" height="7"><use href="#arrdn"/></svg></div>
<div class="thumb" style="top:18px;height:162px">
<div class="a" style="left:3px;top:77px;width:6px;height:7px;background:repeating-linear-gradient(#eef3ff 0 1px,#8da6dc 1px 2px)"></div>
</div></div>
<div class="sb" style="left:1260px;top:600px;width:18px;height:118px">
<div class="sbb" style="top:1px"><svg width="9" height="7"><use href="#arrup"/></svg></div>
<div class="sbb" style="top:102px"><svg width="9" height="7"><use href="#arrdn"/></svg></div>
<div class="thumb" style="top:18px;height:23px">
<div class="a" style="left:3px;top:7px;width:6px;height:7px;background:repeating-linear-gradient(#eef3ff 0 1px,#8da6dc 1px 2px)"></div>
</div></div>
<div class="a" style="left:0;top:718px;width:1280px;height:1px;background:#fbfaf6"></div>
<div class="a" style="left:0;top:719px;width:1280px;height:1px;background:#f6f4ec"></div>
<div class="a" style="left:0;top:720px;width:1280px;height:1px;background:#b0ad9c"></div>
<div class="a" style="left:1184px;top:722px;width:1px;height:15px;background:#fbfaf5"></div>
<div class="t " style="left:1.5px;top:723px;">Klar</div>
<div class="a" style="left:837px;top:721px;width:1px;height:15px;background:#c5c2b2;box-shadow:1px 0 0 #fff"></div>
<div class="a" style="left:920px;top:721px;width:1px;height:15px;background:#c5c2b2;box-shadow:1px 0 0 #fff"></div>
<div class="a" style="left:1029px;top:721px;width:1px;height:15px;background:#c5c2b2;box-shadow:1px 0 0 #fff"></div>
<div class="a" style="left:1246px;top:721px;width:1px;height:15px;background:#c5c2b2;box-shadow:1px 0 0 #fff"></div>
<div class="t " style="left:1188px;top:723px;letter-spacing:.22px">Kø: 0 bytes</div>
<div class="a" style="left:1253px;top:726px;width:9px;height:9px;border-radius:5px;background:radial-gradient(circle at 35% 35%,#fff 0,#30b030 18%,#008000 45%,#006000);border:1px solid #8a8a80"></div>
<div class="a" style="left:1267px;top:726px;width:9px;height:9px;border-radius:5px;background:radial-gradient(circle at 35% 35%,#fff 0,#c03030 18%,#990000 45%,#700000);border:1px solid #8a8a80"></div>
<div class="a" style="left:0;top:738px;width:1280px;height:30px;background:linear-gradient(#3168d5 0,#4993e6 2px,#2663e0 5px,#245edc 10px,#2157d6 24px,#1941a5 30px)"></div>
<div class="a" style="left:0;top:738px;width:98px;height:30px;border-radius:0 9px 9px 0 / 0 13px 13px 0;background:linear-gradient(#2a7a2a 0,#3e923e 1px,#62b462 3px,#459f45 7px,#3c963c 14px,#379037 22px,#2d7a2d 28px,#256a25 30px);box-shadow:1px 0 2px #1a3a8a,inset -3px 0 3px rgba(20,70,20,.55),inset 2px 0 2px rgba(20,70,20,.35)"></div>
<svg class="a" style="left:10px;top:743px" width="22" height="20" viewBox="0 0 20 18"><path d="M2 3 Q5 1 9 3 L8 8 Q4.5 6 1 8Z" fill="#e8502a"/><path d="M10.5 3.5 Q14 5.5 18 3.5 L17 8.5 Q13 10.5 9.5 8.500Z" fill="#7cc242"/><path d="M0.8 9.5 Q4.5 7.5 8 9.5 L7 14.5 Q3.5 12.5 0 14.500Z" fill="#3b8de0"/><path d="M9.3 10 Q13 12 16.8 10 L15.8 15 Q12 17 8.3 15Z" fill="#f5c21b"/></svg>
<div class="a" style="left:36px;top:741px;font-family:'Liberation Sans',sans-serif;font-style:italic;font-weight:bold;font-size:17.500px;line-height:24px;color:#fff;text-shadow:1px 1px 1px #1a4a1a">Start</div>
<div class="tk" style="left:108.0px"><span>Dyrepraten :: Forside…</span></div>
<div class="tk" style="left:268.5px"><span>MSN Hotmail - Messa…</span></div>
<div class="tk act" style="left:429.0px"><span>FileZilla - Tilkoblet ftpf…</span></div>
<div class="tk" style="left:589.5px"><span>Uten navn - Paint</span></div>
<svg class="a" style="left:117px;top:745px" width="17" height="17" viewBox="0 0 17 17"><path d="M4.5 0.5 H12 L15.5 4 V15.5 H4.500Z" fill="#fff" stroke="#8a8a8a"/><path d="M12 0.5 V4 H15.5" fill="none" stroke="#8a8a8a"/><text x="2" y="12.5" font-family="Liberation Sans,sans-serif" font-weight="bold" font-style="italic" font-size="13" fill="#2a78e0">e</text><path d="M0.5 9 Q6 1 12 5" fill="none" stroke="#f0b020" stroke-width="1.2"/></svg>
<svg class="a" style="left:280px;top:745px" width="16" height="17" viewBox="0 0 16 17"><ellipse cx="8" cy="8.5" rx="4.6" ry="6.5" fill="none" stroke="#d81818" stroke-width="2.6"/><ellipse cx="8" cy="8.5" rx="3" ry="5.2" fill="#fff" fill-opacity=".7"/><path d="M3 14.5 Q8 17 13 14.5" stroke="#600" stroke-opacity=".4" fill="none"/></svg>
<svg class="a" style="left:440px;top:745px" width="16" height="16" viewBox="0 0 16 16"><rect width="16" height="16" fill="url(#fzb)"/><text x="2" y="14" font-family="Liberation Sans,sans-serif" font-weight="bold" font-size="16" fill="url(#fzt)" textLength="13" lengthAdjust="spacingAndGlyphs" letter-spacing="-2">FZ</text></svg>
<svg class="a" style="left:598px;top:744px" width="16" height="18" viewBox="0 0 16 18"><path d="M3 7 H13 L11.5 17 H4.500Z" fill="#e8e8f0" stroke="#707088" stroke-width="0.8"/><path d="M5 8 L3 1" stroke="#e03020" stroke-width="1.8"/><path d="M7 8 L6.5 0.5" stroke="#f0c020" stroke-width="1.8"/><path d="M9 8 L10 0.5" stroke="#30a030" stroke-width="1.8"/><path d="M11 8 L13.5 1.5" stroke="#c06020" stroke-width="1.8"/></svg>
<div class="a" style="left:1080px;top:738px;width:200px;height:30px;background:linear-gradient(#1a86e0 0,#3ab0f8 2px,#159aee 5px,#1290e8 20px,#0e7ad0 30px);border-left:1px solid #0a5ab0"></div>
<div class="a" style="left:1041px;top:744px;width:20px;height:19px;background:#2862dc"></div>
<div class="t " style="left:1043.5px;top:747px;color:#fff;font-size:11px">NO</div>
<div class="t " style="left:1239.5px;top:747px;color:#fff;font-size:11px">21:09</div>
<svg class="a" style="left:1070px;top:744px" width="19" height="19" viewBox="0 0 19 19"><defs><radialGradient id="chv" cx=".4" cy=".35" r=".7"><stop offset="0" stop-color="#9cc8ff"/><stop offset=".6" stop-color="#3a88f0"/><stop offset="1" stop-color="#1a58c8"/></radialGradient></defs><circle cx="9.5" cy="9.5" r="8.8" fill="url(#chv)" stroke="#cfe4ff" stroke-width="0.8"/><path d="M11.5 5.5 L7.5 9.5 L11.5 13.5" fill="none" stroke="#fff" stroke-width="2.2"/></svg>
<svg class="a" style="left:1090px;top:745px" width="17" height="17" viewBox="0 0 17 17"><rect x="6" y="0.5" width="8" height="6" fill="#404868" stroke="#a0a8c8"/><rect x="0.5" y="4.5" width="8" height="6.5" fill="#505878" stroke="#b0b8d8"/><path d="M1 13 H9" stroke="#c0c8e0" stroke-width="2"/><path d="M8 8.5 L15.5 16 M15.5 8.5 L8 16" stroke="#f02020" stroke-width="2.2"/></svg>
<svg class="a" style="left:1108px;top:744px" width="18" height="18" viewBox="0 0 18 18"><rect x="0.5" y="4.5" width="8.5" height="7" fill="#b8e0f8" stroke="#e8f4ff"/><path d="M0 14.5 H10" stroke="#e0e8f0" stroke-width="2.5"/><path d="M10.5 5 Q12 7.5 10.5 10 M13 3.5 Q15.5 7.5 13 11.5 M15.5 2 Q19 7.5 15.5 13" fill="none" stroke="#30c030" stroke-width="1.5"/></svg>
<svg class="a" style="left:1126px;top:745px" width="17" height="17" viewBox="0 0 17 17"><circle cx="8.5" cy="8.5" r="7.5" fill="#f8c010" stroke="#a07808" stroke-width="1"/><circle cx="8.5" cy="8.5" r="5" fill="none" stroke="#000" stroke-width="1"/><path d="M3.5 8.5 H13.5 M8.5 3.5 V13.5 M4.5 6 H12.5 M4.5 11 H12.5" stroke="#000" stroke-width="0.9"/><ellipse cx="8.5" cy="8.5" rx="2.3" ry="5" fill="none" stroke="#000" stroke-width="0.9"/></svg>
<svg class="a" style="left:1146px;top:744px" width="13" height="19" viewBox="0 0 13 19"><rect x="0.5" y="0.5" width="12" height="18" rx="4" fill="#1038d0" stroke="#0828a0"/><path d="M3.5 6 L9.5 12 L6.5 15 V4 L9.5 7 L3.5 13" fill="none" stroke="#fff" stroke-width="1.4"/></svg>
<svg class="a" style="left:1162px;top:744px" width="18" height="19" viewBox="0 0 18 19"><path d="M1 1 Q6 1 10 6 L13 10 L9 13 L5 9 Q1 5 1 1Z" fill="#8a8e98" stroke="#2a2e38" stroke-width="1"/><path d="M9 13 L10 17 L13 14 L13 10Z" fill="#505868" stroke="#2a2e38" stroke-width="0.8"/><path d="M12 12 L16.5 17.5 L11 16Z" fill="#3890e8"/></svg>
<svg class="a" style="left:1179px;top:744px" width="19" height="19" viewBox="0 0 19 19"><circle cx="7.5" cy="4.5" r="3.3" fill="#68c058" stroke="#2a7030" stroke-width="0.8"/><path d="M1 17 Q1 9 7.5 9 Q14 9 14 17Z" fill="#58b0a0" stroke="#2a7060" stroke-width="0.8"/><path d="M11 12 L18 8 L18 17 L11 17Z" fill="#f09030"/><path d="M0.5 17.5 H14" stroke="#a0d8f0" stroke-width="1.5"/></svg>
<svg class="a" style="left:1197px;top:744px" width="18" height="19" viewBox="0 0 18 19"><circle cx="8" cy="8" r="7" fill="#70747c" stroke="#c0c4cc" stroke-width="1"/><circle cx="8" cy="8" r="3.5" fill="#30343c" stroke="#989ca4"/><path d="M12 15 L17 10 M10 17.5 L15 13" stroke="#a8c8f0" stroke-width="1"/></svg>
<svg class="a" style="left:1216px;top:743px" width="17" height="21" viewBox="0 0 17 21"><path d="M11 1 Q15 4 14.5 11 Q13.5 19 7 19.5 Q1.5 19 2 12.5 Q3 6 9 4.5 Q13 4 13 8 Q12.5 13 8 13.5" fill="none" stroke="#e01010" stroke-width="1.6"/></svg>
<svg class="a" style="left:0;top:0;pointer-events:none" width="480" height="300"><ellipse cx="146" cy="169" rx="109" ry="69" fill="none" stroke="#ff0000" stroke-width="1.1"/></svg>
</body></html>
